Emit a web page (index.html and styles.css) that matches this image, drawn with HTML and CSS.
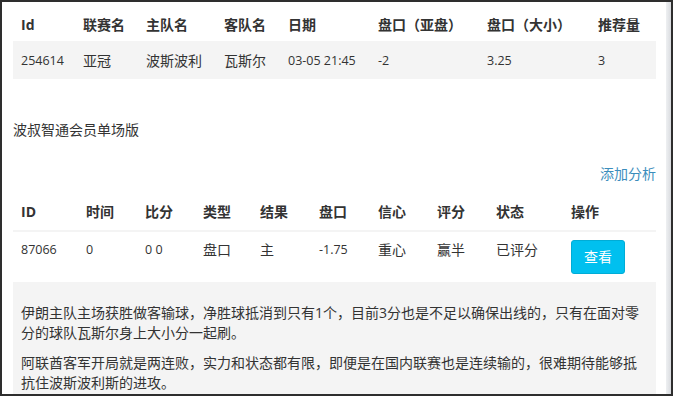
FILE: index.html
```html
<!DOCTYPE html>
<html lang="zh-CN">
  <head>
    <meta charset="UTF-8" />
    <meta name="viewport" content="width=device-width, initial-scale=1.0" />
    <title>波叔智通会员单场版</title>
    <link rel="stylesheet" href="styles.css">
  </head>
  <body>
    <div class="frame">
      <div class="content">
        <table class="table match-table">
          <colgroup>
            <col class="c-id" />
            <col class="c-league" />
            <col class="c-home" />
            <col class="c-away" />
            <col class="c-date" />
            <col class="c-asia" />
            <col class="c-total" />
            <col />
          </colgroup>
          <thead>
            <tr>
              <th>Id</th>
              <th>联赛名</th>
              <th>主队名</th>
              <th>客队名</th>
              <th>日期</th>
              <th>盘口（亚盘）</th>
              <th>盘口（大小）</th>
              <th>推荐量</th>
            </tr>
          </thead>
          <tbody>
            <tr class="striped">
              <td class="num">254614</td>
              <td>亚冠</td>
              <td>波斯波利</td>
              <td>瓦斯尔</td>
              <td class="num">03-05 21:45</td>
              <td class="num">-2</td>
              <td class="num">3.25</td>
              <td class="num">3</td>
            </tr>
          </tbody>
        </table>

        <p class="section-title">波叔智通会员单场版</p>
        <div class="actions"><a href="#">添加分析</a></div>

        <table class="table analysis-table">
          <colgroup>
            <col class="c-id" />
            <col class="c-mid" />
            <col class="c-score" />
            <col class="c-type" />
            <col class="c-mid" />
            <col class="c-mid" />
            <col class="c-mid" />
            <col class="c-mid" />
            <col class="c-state" />
            <col />
          </colgroup>
          <thead>
            <tr>
              <th>ID</th>
              <th>时间</th>
              <th>比分</th>
              <th>类型</th>
              <th>结果</th>
              <th>盘口</th>
              <th>信心</th>
              <th>评分</th>
              <th>状态</th>
              <th>操作</th>
            </tr>
          </thead>
          <tbody>
            <tr>
              <td class="num">87066</td>
              <td class="num">0</td>
              <td class="num">0 0</td>
              <td>盘口</td>
              <td>主</td>
              <td class="num">-1.75</td>
              <td>重心</td>
              <td>赢半</td>
              <td>已评分</td>
              <td><button class="btn btn-info">查看</button></td>
            </tr>
            <tr class="striped">
              <td colspan="10" class="analysis">
                <p>伊朗主队主场获胜做客输球，净胜球抵消到只有1个，目前3分也是不足以确保出线的，只有在面对零分的球队瓦斯尔身上大小分一起刷。</p>
                <p>阿联酋客军开局就是两连败，实力和状态都有限，即便是在国内联赛也是连续输的，很难期待能够抵抗住波斯波利斯的进攻。</p>
              </td>
            </tr>
          </tbody>
        </table>
      </div>
      <div class="scrollbar"></div>
    </div>
  </body>
</html>
```

FILE: styles.css
```css
* {
  box-sizing: border-box;
}

html,
body {
  margin: 0;
  padding: 0;
  background: #fff;
}

body {
  font-family: "Open Sans", "Noto Sans CJK SC", sans-serif;
  font-size: 14px;
  line-height: 20px;
  color: #333;
}

.frame {
  width: 673px;
  height: 396px;
  border: 2px solid #2e2e2e;
  display: flex;
  overflow: hidden;
}

.content {
  flex: 1;
  padding: 3px 10px 0 11px;
  overflow: hidden;
}

.scrollbar {
  width: 5px;
  background: linear-gradient(to right, #eef0f2, #d9dbdf);
}

.table {
  width: 100%;
  table-layout: fixed;
  border-collapse: collapse;
  border-spacing: 0;
}

/* column widths */
.match-table .c-id {
  width: 62px;
}
.match-table .c-league {
  width: 63px;
}
.match-table .c-home {
  width: 78px;
}
.match-table .c-away {
  width: 64px;
}
.match-table .c-date {
  width: 90px;
}
.match-table .c-asia {
  width: 109px;
}
.match-table .c-total {
  width: 111px;
}

.analysis-table .c-id {
  width: 65px;
}
.analysis-table .c-mid {
  width: 59px;
}
.analysis-table .c-score {
  width: 58px;
}
.analysis-table .c-type {
  width: 57px;
}
.analysis-table .c-state {
  width: 75px;
}

.table th,
.table td {
  padding: 8px;
  text-align: left;
  vertical-align: top;
  white-space: nowrap;
}

.table th {
  font-weight: bold;
  border-bottom: 2px solid #f4f4f4;
}

.match-table th {
  padding: 10px 8px 6px 8px;
}

.table .striped {
  background-color: #f4f4f4;
}

.table .num {
  font-size: 12.5px;
}

.section-title {
  margin: 41px 0 0 0;
}

.actions {
  margin-top: 24px;
  text-align: right;
}

.actions a {
  color: #3c8dbc;
  text-decoration: none;
}

.analysis-table {
  margin-top: 10px;
}

.btn {
  font-family: "Open Sans", "Noto Sans CJK SC", sans-serif;
  font-size: 14px;
  line-height: 20px;
  padding: 6px 12px;
  border-radius: 3px;
  cursor: pointer;
}

.btn-info {
  background-color: #00c0ef;
  border: 1px solid #00acd6;
  color: #fff;
}

.table td.analysis {
  white-space: normal;
  padding: 21px 8px 8px 8px;
}

.analysis p {
  margin: 0 0 10px 0;
}
```
